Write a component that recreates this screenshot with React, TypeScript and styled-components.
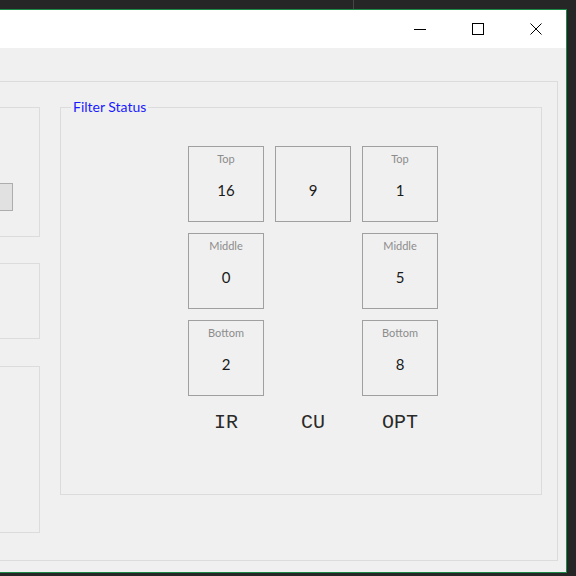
import styled, { createGlobalStyle } from 'styled-components';

const GlobalStyle = createGlobalStyle`
  html,
  body {
    margin: 0;
    padding: 0;
    background: #262626;
  }

  body {
    font-family: Lato, 'Noto Sans', sans-serif;
  }
`;

const Screen = styled.div`
  width: 576px;
  height: 576px;
  overflow: hidden;
  display: flex;
  flex-direction: column;
  background: #262626;
`;

const DesktopStrip = styled.div`
  height: 9px;
  flex-shrink: 0;
  display: flex;
  padding-left: 353px;

  > span {
    width: 1px;
    background: #464646;
  }
`;

const Window = styled.div`
  width: 567px;
  height: 564px;
  box-sizing: border-box;
  flex-shrink: 0;
  display: flex;
  flex-direction: column;
  border: 1px solid #1a8a46;
  border-left: none;
`;

const TitleBar = styled.div`
  height: 38px;
  flex-shrink: 0;
  display: flex;
  justify-content: flex-end;
  padding-right: 1px;
  background: #fff;
`;

const CaptionButton = styled.div`
  width: 58px;
  display: flex;
  align-items: center;
  justify-content: center;
`;

const Client = styled.div`
  flex: 1;
  display: flex;
  padding: 33px 8px 11px 0;
  background: #f0f0f0;
`;

const OuterGroup = styled.div`
  flex: 1;
  display: flex;
  gap: 20px;
  margin-left: -10px;
  padding: 25px 15px 0 0;
  border: 1px solid #dcdcdc;
`;

const LeftColumn = styled.div`
  width: 49px;
  flex-shrink: 0;
  display: flex;
  flex-direction: column;
`;

const SidePanel = styled.div<{ $height: number; $gap?: number }>`
  height: ${({ $height }) => $height}px;
  margin-top: ${({ $gap }) => $gap ?? 0}px;
  box-sizing: border-box;
  display: flex;
  justify-content: flex-end;
  align-items: flex-start;
  border: 1px solid #dcdcdc;
  border-left: none;
`;

const SideButton = styled.div`
  width: 40px;
  height: 28px;
  margin: 75px 26px 0 0;
  box-sizing: border-box;
  background: #e1e1e1;
  border: 1px solid #adadad;
  border-left: none;
`;

const FilterGroup = styled.fieldset`
  width: 482px;
  height: 396px;
  box-sizing: border-box;
  min-width: 0;
  margin: -8px 0 0;
  padding: 0;
  border: 1px solid #dcdcdc;
`;

const GroupTitle = styled.legend`
  margin-left: 10px;
  padding: 0 2px;
  font-size: 14px;
  line-height: 16px;
  color: #1a1aff;
`;

const FilterGrid = styled.div`
  display: grid;
  grid-template-columns: repeat(3, 76px);
  grid-template-rows: repeat(3, 76px) auto;
  gap: 11px;
  margin: 31px 0 0 127px;
`;

const Tile = styled.div`
  box-sizing: border-box;
  display: flex;
  flex-direction: column;
  align-items: center;
  padding-top: 4px;
  border: 1px solid #a0a0a0;
`;

const TileLabel = styled.span`
  height: 15px;
  font-size: 11px;
  line-height: 15px;
  color: #8c8c8c;
`;

const TileValue = styled.span`
  margin-top: 15px;
  font-size: 15px;
  line-height: 19px;
  color: #1a1a1a;
`;

const ChannelLabel = styled.div`
  padding-top: 6px;
  text-align: center;
  font-family: 'Liberation Mono', 'Courier New', monospace;
  font-size: 20px;
  line-height: 20px;
  color: #2a2a2a;
`;

type TileData = { label?: string; value: number } | null;

const tiles: TileData[][] = [
  [{ label: 'Top', value: 16 }, { value: 9 }, { label: 'Top', value: 1 }],
  [{ label: 'Middle', value: 0 }, null, { label: 'Middle', value: 5 }],
  [{ label: 'Bottom', value: 2 }, null, { label: 'Bottom', value: 8 }],
];

const channels = ['IR', 'CU', 'OPT'];

function MinimizeIcon() {
  return (
    <svg width="12" height="12" viewBox="0 0 12 12">
      <line x1="0" y1="6.5" x2="12" y2="6.5" stroke="#000" strokeWidth="1" />
    </svg>
  );
}

function MaximizeIcon() {
  return (
    <svg width="12" height="12" viewBox="0 0 12 12">
      <rect x="0.5" y="0.5" width="11" height="11" fill="none" stroke="#000" strokeWidth="1" />
    </svg>
  );
}

function CloseIcon() {
  return (
    <svg width="12" height="12" viewBox="0 0 12 12">
      <path d="M0.5 0.5 L11.5 11.5 M11.5 0.5 L0.5 11.5" stroke="#000" strokeWidth="1" />
    </svg>
  );
}

function App() {
  return (
    <>
      <GlobalStyle />
      <Screen>
        <DesktopStrip>
          <span />
        </DesktopStrip>
        <Window>
          <TitleBar>
            <CaptionButton>
              <MinimizeIcon />
            </CaptionButton>
            <CaptionButton>
              <MaximizeIcon />
            </CaptionButton>
            <CaptionButton>
              <CloseIcon />
            </CaptionButton>
          </TitleBar>
          <Client>
            <OuterGroup>
              <LeftColumn>
                <SidePanel $height={130}>
                  <SideButton />
                </SidePanel>
                <SidePanel $height={76} $gap={26} />
                <SidePanel $height={167} $gap={27} />
              </LeftColumn>
              <FilterGroup>
                <GroupTitle>Filter Status</GroupTitle>
                <FilterGrid>
                  {tiles.flatMap((row, r) =>
                    row.map((tile, c) =>
                      tile ? (
                        <Tile key={`${r}-${c}`}>
                          <TileLabel>{tile.label ?? ''}</TileLabel>
                          <TileValue>{tile.value}</TileValue>
                        </Tile>
                      ) : (
                        <div key={`${r}-${c}`} />
                      ),
                    ),
                  )}
                  {channels.map((name) => (
                    <ChannelLabel key={name}>{name}</ChannelLabel>
                  ))}
                </FilterGrid>
              </FilterGroup>
            </OuterGroup>
          </Client>
        </Window>
      </Screen>
    </>
  );
}

export default App;
